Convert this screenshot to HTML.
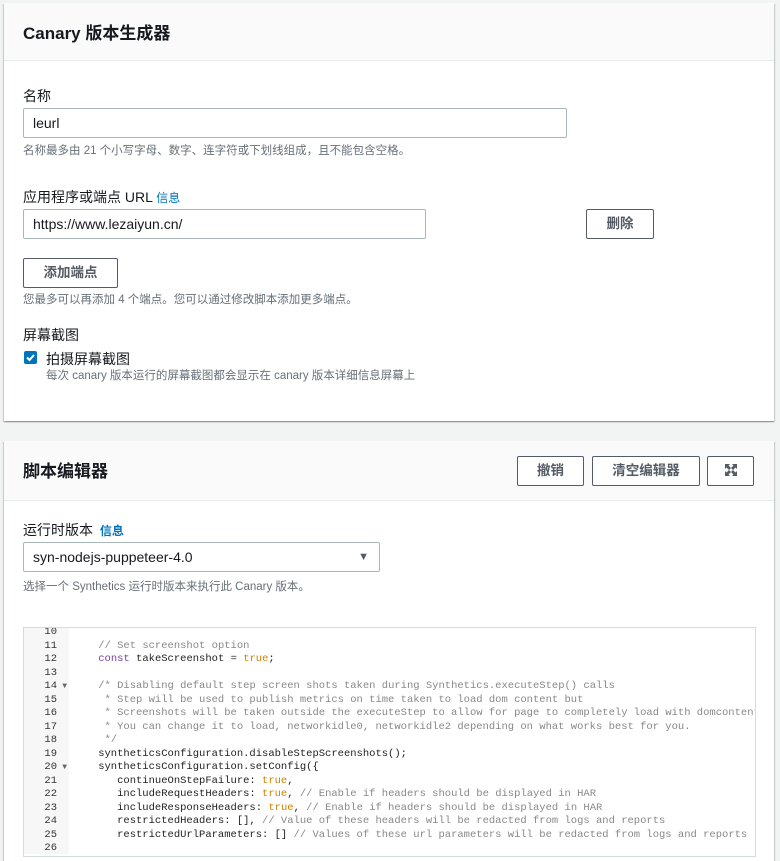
<!DOCTYPE html>
<html><head><meta charset="utf-8"><style>
*{box-sizing:border-box;margin:0;padding:0}
body{width:780px;height:844px;overflow:hidden;background:#f2f3f3;font-family:"Liberation Sans","Noto Sans CJK SC",sans-serif;color:#16191f;position:relative}
.card{position:absolute;left:4px;width:770px;background:#fff;box-shadow:0 1px 1px rgba(0,28,36,.3),1px 1px 1px rgba(0,28,36,.15),-1px 1px 1px rgba(0,28,36,.15)}
.hd{background:#fafafa;border-bottom:1px solid #eaeded;position:relative}
.abs{position:absolute}
.h2{font-size:17px;font-weight:bold}
.lbl{font-size:14px}
.hint{font-size:11.5px;color:#687078}
.inp{position:absolute;height:30px;border:1px solid #aab7b8;border-radius:2px;font-size:14px;padding:0 9px;line-height:28px;background:#fff}
.btn{position:absolute;height:30px;border:1px solid #545b64;border-radius:2px;font-size:13.5px;font-weight:bold;color:#545b64;text-align:center;line-height:28px;background:#fff}
.info{color:#0073bb;font-size:12px}
.code{position:absolute;left:19px;top:186px;width:733px;height:230px;border:1px solid #d5dbdb;overflow:hidden;font-family:"Liberation Mono",monospace;font-size:10.5px;line-height:13.5px;white-space:pre}
.gut{position:absolute;left:0;top:0;width:45px;height:100%;background:#f7f7f7;color:#333;text-align:right}
.gut div{padding-right:12px;position:relative;height:13.5px}
.gut div span{position:absolute;right:2px;top:0;font-size:8px;color:#666}
.txt{position:absolute;left:49px;top:0;color:#222}
.c{color:#888}.k{color:#7a3e9d}.t{color:#d08000}.p{color:#333}
</style></head><body>
<div class="card" style="top:3px;height:418px">
 <div class="hd" style="height:58px"><div class="abs h2" style="left:19px;top:16px">Canary 版本生成器</div></div>
 <div class="abs lbl" style="left:19px;top:83px">名称</div>
 <div class="inp" style="left:19px;top:105px;width:544px">leurl</div>
 <div class="abs hint" style="left:19px;top:139px">名称最多由 21 个小写字母、数字、连字符或下划线组成，且不能包含空格。</div>
 <div class="abs lbl" style="left:19px;top:184px">应用程序或端点 URL <span class="info">信息</span></div>
 <div class="inp" style="left:19px;top:206px;width:403px">https://www.lezaiyun.cn/</div>
 <div class="btn" style="left:582px;top:206px;width:68px">删除</div>
 <div class="btn" style="left:19px;top:255px;width:95px">添加端点</div>
 <div class="abs hint" style="left:19px;top:288px">您最多可以再添加 4 个端点。您可以通过修改脚本添加更多端点。</div>
 <div class="abs lbl" style="left:19px;top:322px">屏幕截图</div>
 <div class="abs" style="left:20px;top:348px;width:13px;height:13px;background:#0073bb;border-radius:2px"><svg width="13" height="13" viewBox="0 0 13 13"><path d="M3 6.5l2.5 2.5 4.5-5" stroke="#fff" stroke-width="2" fill="none"/></svg></div>
 <div class="abs lbl" style="left:42px;top:346px">拍摄屏幕截图</div>
 <div class="abs hint" style="left:42px;top:364px">每次 canary 版本运行的屏幕截图都会显示在 canary 版本详细信息屏幕上</div>
</div>
<div class="card" style="top:441px;height:420px">
 <div class="hd" style="height:60px"><div class="abs h2" style="left:19px;top:16px">脚本编辑器</div>
  <div class="btn" style="left:513px;top:15px;width:67px">撤销</div>
  <div class="btn" style="left:588px;top:15px;width:108px">清空编辑器</div>
  <div class="btn" style="left:703px;top:15px;width:47px"><svg width="14" height="14" viewBox="0 0 14 14" style="vertical-align:-2px"><path d="M1 1h5L4.5 2.5 7 5 5 7 2.5 4.5 1 6zM13 1v5L11.5 4.5 9 7 7 5 9.5 2.5 8 1zM1 13V8l1.5 1.5L5 7l2 2-2.5 2.5L6 13zM13 13H8l1.5-1.5L7 9l2-2 2.5 2.5L13 8z" fill="#545b64"/></svg></div>
 </div>
 <div class="abs lbl" style="left:19px;top:79px">运行时版本 <span class="info" style="font-weight:bold;margin-left:3px">信息</span></div>
 <div class="inp" style="left:19px;top:101px;width:357px">syn-nodejs-puppeteer-4.0<span style="position:absolute;right:10px;top:0;font-size:11px;color:#545b64">▼</span></div>
 <div class="abs hint" style="left:19px;top:137px">选择一个 Synthetics 运行时版本来执行此 Canary 版本。</div>
 <div class="code" style="top:186px">
  <div class="gut" style="top:-2px"><div>10</div><div>11</div><div>12</div><div>13</div><div>14<span>▼</span></div><div>15</div><div>16</div><div>17</div><div>18</div><div>19</div><div>20<span>▼</span></div><div>21</div><div>22</div><div>23</div><div>24</div><div>25</div><div>26</div></div>
  <div class="txt" style="top:-2px">
    <span class="c">// Set screenshot option</span>
    <span class="k">const</span> takeScreenshot <span class="p">=</span> <span class="t">true</span>;

    <span class="c">/* Disabling default step screen shots taken during Synthetics.executeStep() calls</span>
<span class="c">     * Step will be used to publish metrics on time taken to load dom content but</span>
<span class="c">     * Screenshots will be taken outside the executeStep to allow for page to completely load with domcontentloaded</span>
<span class="c">     * You can change it to load, networkidle0, networkidle2 depending on what works best for you.</span>
<span class="c">     */</span>
    syntheticsConfiguration.disableStepScreenshots();
    syntheticsConfiguration.setConfig({
       continueOnStepFailure: <span class="t">true</span>,
       includeRequestHeaders: <span class="t">true</span>, <span class="c">// Enable if headers should be displayed in HAR</span>
       includeResponseHeaders: <span class="t">true</span>, <span class="c">// Enable if headers should be displayed in HAR</span>
       restrictedHeaders: [], <span class="c">// Value of these headers will be redacted from logs and reports</span>
       restrictedUrlParameters: [] <span class="c">// Values of these url parameters will be redacted from logs and reports</span>
  </div>
 </div>
</div>
</body></html>
